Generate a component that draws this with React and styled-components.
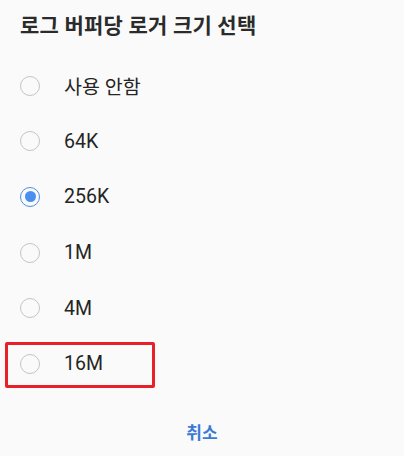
import React, { useState } from "react";
import styled, { createGlobalStyle } from "styled-components";

const Global = createGlobalStyle`
  html, body { margin: 0; padding: 0; background: #fafafa; }
  body { font-family: "Roboto", "Noto Sans CJK KR", sans-serif; }
`;

const Dialog = styled.div`
  width: 404px;
  height: 456px;
  background: #fafafa;
  display: flex;
  flex-direction: column;
  box-sizing: border-box;
`;

const Title = styled.h1`
  margin: 0;
  height: 58px;
  display: flex;
  align-items: center;
  padding: 0 0 10px 20px;
  box-sizing: border-box;
  font-size: 21px;
  font-weight: 700;
  color: #2b2b2b;
  font-family: "Roboto", "Noto Sans CJK KR", sans-serif;
  letter-spacing: 0.2px;
`;

const List = styled.div`
  display: flex;
  flex-direction: column;
`;

const Row = styled.label`
  position: relative;
  height: 55.6px;
  display: flex;
  align-items: center;
  padding-left: 20px;
  gap: 24px;
  cursor: pointer;

  ${(p) =>
    p.$highlight &&
    `
    &::after {
      content: "";
      position: absolute;
      left: 5px;
      top: 6px;
      width: 150px;
      height: 46px;
      box-sizing: border-box;
      border: 3px solid #e8202a;
      border-radius: 2px;
    }
  `}
`;

const Radio = styled.span`
  width: 20px;
  height: 20px;
  box-sizing: border-box;
  border-radius: 50%;
  border: 1.5px solid ${(p) => (p.$checked ? "#4c8ee8" : "#c4c4c4")};
  display: flex;
  align-items: center;
  justify-content: center;
  flex-shrink: 0;

  &::before {
    content: "";
    width: 11px;
    height: 11px;
    border-radius: 50%;
    background: #4a8ff0;
    display: ${(p) => (p.$checked ? "block" : "none")};
  }
`;

const Label = styled.span`
  font-size: 19.5px;
  color: #252525;
  font-family: "Roboto", "Noto Sans CJK KR", sans-serif;
`;

const Footer = styled.div`
  flex: 1;
  display: flex;
  justify-content: center;
  align-items: flex-start;
  padding-top: 27px;
`;

const CancelButton = styled.button`
  border: none;
  background: transparent;
  padding: 0;
  font-size: 17px;
  font-weight: 700;
  color: #3b7ad6;
  font-family: "Roboto", "Noto Sans CJK KR", sans-serif;
  cursor: pointer;
`;

const options = ["사용 안함", "64K", "256K", "1M", "4M", "16M"];

export default function App() {
  const [selected, setSelected] = useState("256K");
  return (
    <>
      <Global />
      <Dialog>
        <Title>로그 버퍼당 로거 크기 선택</Title>
        <List>
          {options.map((o) => (
            <Row key={o} $highlight={o === "16M"} onClick={() => setSelected(o)}>
              <Radio $checked={selected === o} />
              <Label>{o}</Label>
            </Row>
          ))}
        </List>
        <Footer>
          <CancelButton>취소</CancelButton>
        </Footer>
      </Dialog>
    </>
  );
}
